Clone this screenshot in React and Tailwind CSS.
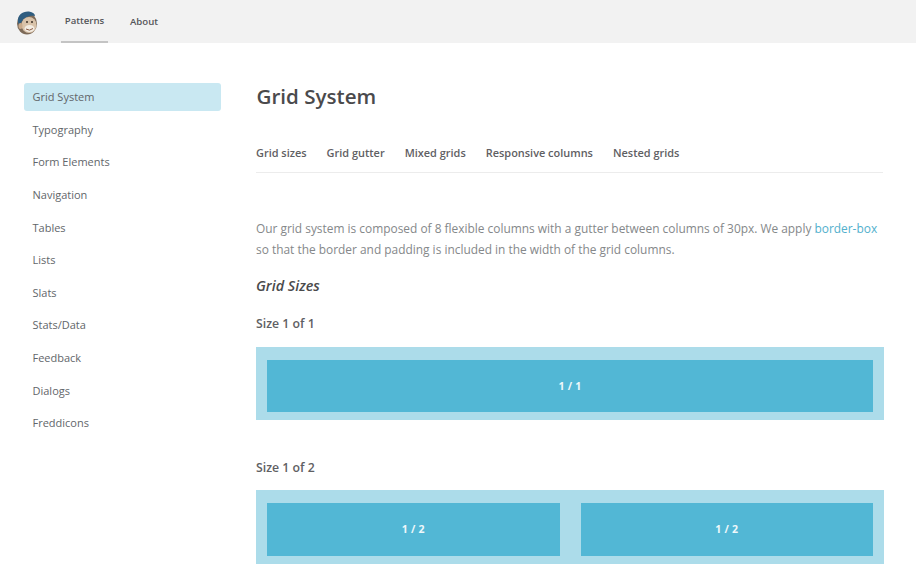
const side = ["Grid System","Typography","Form Elements","Navigation","Tables","Lists","Slats","Stats/Data","Feedback","Dialogs","Freddicons"];
const tabs = ["Grid sizes","Grid gutter","Mixed grids","Responsive columns","Nested grids"];

function Logo() {
  return (
    <svg width="24" height="26" viewBox="0 0 24 26" className="block">
      <ellipse cx="12" cy="13.5" rx="10" ry="11" fill="#7d6a58" />
      <path d="M3 12 C2 5 8 1 14 1.500 C18 2 20 4 20 6 C15 5 9 7 6 13 L4 15 Z" fill="#2f5d80" />
      <ellipse cx="14" cy="15" rx="7.500" ry="8" fill="#d9c3aa" />
      <ellipse cx="14.500" cy="18.500" rx="5" ry="3.500" fill="#f3ece2" />
      <circle cx="12" cy="12" r="1" fill="#3b3027" />
      <circle cx="17" cy="12" r="1" fill="#3b3027" />
      <path d="M11 19 Q14.500 21.500 18 18.500" stroke="#8a5a44" strokeWidth="1" fill="none" />
      <ellipse cx="5.500" cy="16" rx="2" ry="3" fill="#c9a98a" />
    </svg>
  );
}

function Grid({ items }) {
  return (
    <div className="flex gap-[21px] bg-[#acdcea] pt-[13px] pb-[8px] px-[11px]">
      {items.map((t, i) => (
        <div key={i} className="flex-1 h-[52.400px] pt-[1.500px] bg-[#52b7d5] flex items-center justify-center text-[10.500px] font-bold text-[#eef8fb] tracking-[0.2px]">{t}</div>
      ))}
    </div>
  );
}

export default function App() {
  return (
    <div className="w-[916px] h-[576px] overflow-hidden bg-white font-['Open_Sans',sans-serif]">
      <header className="h-[43px] bg-[#f2f2f2] flex items-stretch">
        <div className="w-[61px] pl-[15px] pt-[10px]"><Logo /></div>
        <nav className="flex gap-[4px] text-[9.600px] font-semibold text-[#55565a]">
          <a className="w-[47px] pt-[1px] flex items-center justify-center border-b-2 border-[#c4c4c4]">Patterns</a>
          <a className="ml-[18px] pt-[1px] flex items-center">About</a>
        </nav>
      </header>
      <div className="flex">
        <aside className="w-[197px] ml-[24px] mt-[39.500px] shrink-0">
          {side.map((s, i) => (
            <div key={s} className={`h-[28px] mb-[4.650px] pl-[8.500px] pt-[1.500px] flex items-center text-[11px] text-[#62666a] rounded-[3px] ${i === 0 ? "bg-[#c9e8f2]" : ""}`}>{s}</div>
          ))}
        </aside>
        <main className="w-[628px] ml-[35px]">
          <h1 className="mt-[37px] h-[32px] leading-[32px] text-[20.600px] font-semibold text-[#4a4a4c] pl-[0.500px]">Grid System</h1>
          <div className="mt-[24px] h-[37px] flex gap-[20px] border-b border-[#ececec] text-[10.950px] font-semibold text-[#5f6063] pt-[9px] w-[627px]">
            {tabs.map(t => <span key={t}>{t}</span>)}
          </div>
          <p className="mt-[44.750px] text-[11.920px] leading-[21px] text-[#85888a] whitespace-nowrap">
            Our grid system is composed of 8 flexible columns with a gutter between columns of 30px. We apply <span className="text-[#52b0cd]">border-box</span>
            <br />so that the border and padding is included in the width of the grid columns.
          </p>
          <h2 className="mt-[15.500px] h-[21px] leading-[21px] text-[14.400px] font-semibold italic text-[#4a4a4c]">Grid Sizes</h2>
          <h3 className="mt-[19px] h-[18px] leading-[18px] text-[12.300px] font-semibold text-[#5f6063]">Size 1 of 1</h3>
          <div className="mt-[13.750px]"><Grid items={["1 / 1"]} /></div>
          <h3 className="mt-[38.500px] h-[18px] leading-[18px] text-[12.300px] font-semibold text-[#5f6063]">Size 1 of 2</h3>
          <div className="mt-[13.500px]"><Grid items={["1 / 2","1 / 2"]} /></div>
        </main>
      </div>
    </div>
  );
}
